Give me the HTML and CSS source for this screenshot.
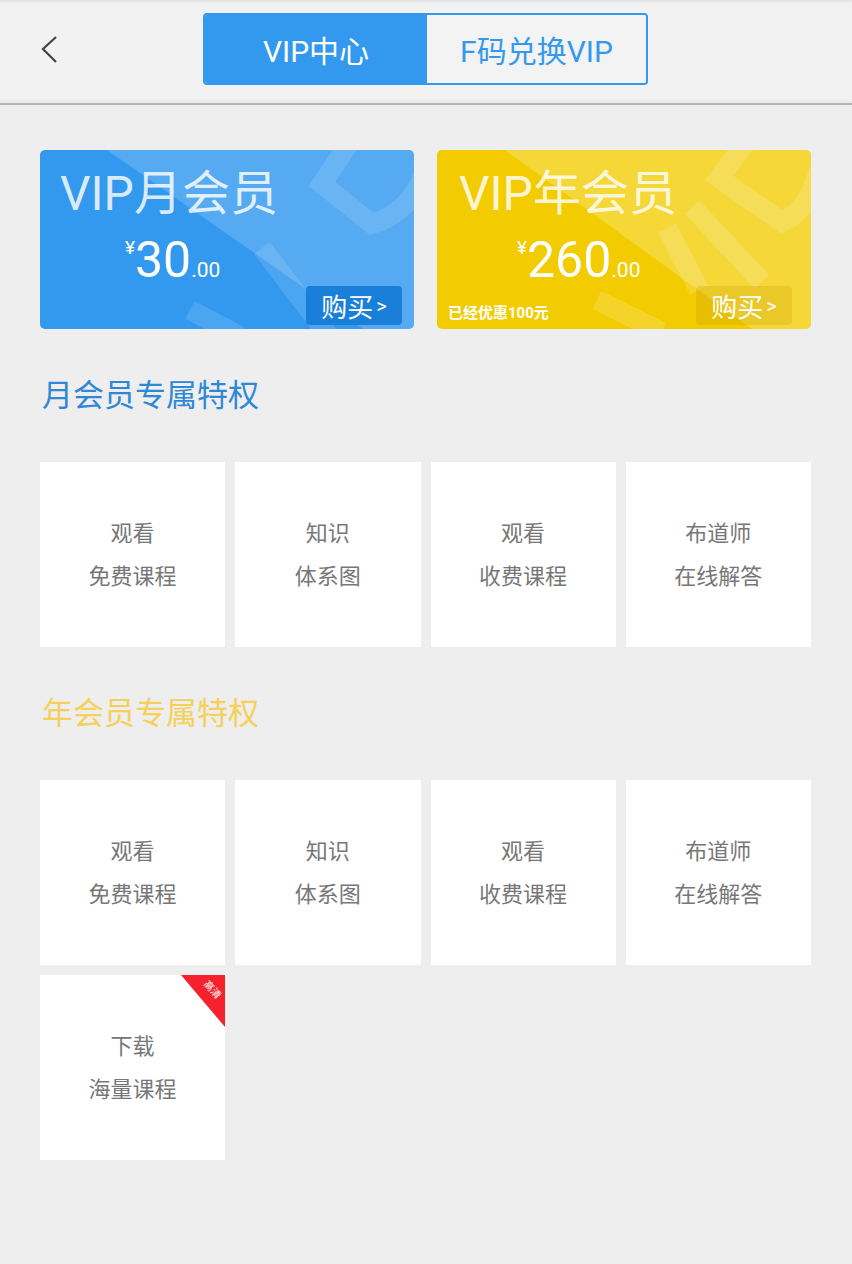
FILE: index.html
```html
<!DOCTYPE html>
<html lang="zh">
<head>
<meta charset="utf-8">
<title>VIP中心</title>
<link rel="stylesheet" href="styles.css">
</head>
<body>
<header class="topbar">
  <div class="back">
    <svg width="20" height="30" viewBox="0 0 20 30"><polyline points="16,2 3,14 16,27" fill="none" stroke="#444" stroke-width="2.2"/></svg>
  </div>
  <div class="segment">
    <div class="seg seg-on">VIP中心</div>
    <div class="seg seg-off">F码兑换VIP</div>
  </div>
</header>

<main class="content">
  <section class="cards">
    <div class="card card-blue">
      <svg class="wm" width="374" height="179" viewBox="0 0 374 179">
        <polygon points="67,0 374,0 374,179 323,179" fill="#fff" fill-opacity="0.17"/>
        <g fill="none" stroke="#fff" stroke-opacity="0.12" stroke-width="20">
          <path d="M310,-8 L282,34 L332,74 Q372,62 386,18"/>
          <path d="M222,98 L292,190"/>
          <path d="M150,160 L200,186"/>
        </g>
      </svg>
      <div class="card-title">VIP月会员</div>
      <div class="price"><span class="yen">¥</span><span class="amt">30</span><span class="dec">.00</span></div>
      <div class="card-foot">
        <span class="note"></span>
        <span class="buy buy-blue">购买<small>&gt;</small></span>
      </div>
    </div>
    <div class="card card-yellow">
      <svg class="wm" width="374" height="179" viewBox="0 0 374 179">
        <polygon points="68,0 374,0 374,179 315,179" fill="#fff" fill-opacity="0.22"/>
        <g fill="none" stroke="#fff" stroke-opacity="0.16" stroke-width="20">
          <path d="M308,-6 L282,28 L345,72 Q372,60 382,20"/>
          <path d="M255,57 L325,132"/>
          <path d="M230,78 L262,140"/>
          <path d="M160,150 L225,182"/>
        </g>
      </svg>
      <div class="card-title">VIP年会员</div>
      <div class="price"><span class="yen">¥</span><span class="amt">260</span><span class="dec">.00</span></div>
      <div class="card-foot">
        <span class="note">已经优惠100元</span>
        <span class="buy buy-yellow">购买<small>&gt;</small></span>
      </div>
    </div>
  </section>

  <h2 class="sec-title sec-blue">月会员专属特权</h2>
  <section class="grid">
    <div class="tile"><span>观看</span><span>免费课程</span></div>
    <div class="tile"><span>知识</span><span>体系图</span></div>
    <div class="tile"><span>观看</span><span>收费课程</span></div>
    <div class="tile"><span>布道师</span><span>在线解答</span></div>
  </section>

  <h2 class="sec-title sec-yellow">年会员专属特权</h2>
  <section class="grid">
    <div class="tile"><span>观看</span><span>免费课程</span></div>
    <div class="tile"><span>知识</span><span>体系图</span></div>
    <div class="tile"><span>观看</span><span>收费课程</span></div>
    <div class="tile"><span>布道师</span><span>在线解答</span></div>
    <div class="tile tile-badge">
      <svg class="ribbon" width="44" height="52" viewBox="0 0 44 52">
        <polygon points="0,0 44,0 44,52" fill="#f5222d"/>
        <text x="29" y="17" transform="rotate(48 29 17)" text-anchor="middle" font-size="10" fill="#fff" font-family="Noto Sans CJK SC, sans-serif">高清</text>
      </svg>
      <span>下载</span><span>海量课程</span>
    </div>
  </section>
</main>
</body>
</html>
```

FILE: styles.css
```css
* { box-sizing: border-box; }
html, body { margin: 0; padding: 0; }
body {
  background: #eeeeee;
  font-family: Roboto, "Liberation Sans", "Noto Sans CJK SC", sans-serif;
  width: 852px;
  min-height: 1264px;
}

.topbar {
  height: 105px;
  background: linear-gradient(#e4e4e4 0, #f2f2f2 4px, #f2f2f2 98px, #eaeaea 103px);
  border-bottom: 2px solid #b4b4b4;
  display: flex;
  align-items: flex-start;
  padding-left: 40px;
}
.back {
  width: 20px;
  height: 30px;
  margin-top: 35px;
}
.back svg { display: block; }
.segment {
  margin-left: 143px;
  margin-top: 13px;
  width: 445px;
  height: 72px;
  border: 2px solid #3399ee;
  border-radius: 4px;
  display: flex;
  overflow: hidden;
}
.seg {
  display: flex;
  align-items: center;
  justify-content: center;
  font-size: 30px;
}
.seg-on {
  width: 222px;
  background: #3399ee;
  color: #fff;
}
.seg-off {
  flex: 1;
  background: #f3f3f3;
  color: #3399ee;
}

.content {
  padding: 45px 41px 0 40px;
}

.cards {
  display: flex;
  gap: 23px;
}
.card {
  position: relative;
  width: 374px;
  height: 179px;
  border-radius: 5px;
  overflow: hidden;
  display: flex;
  flex-direction: column;
  padding: 0 12px 6px 20px;
  color: #fff;
}
.card-blue { background: #3399ee; }
.card-yellow { background: #f2cc00; padding-right: 19px; padding-left: 22px; }
.wm {
  position: absolute;
  left: 0;
  top: 0;
  pointer-events: none;
}
.card-title, .price, .card-foot { position: relative; }
.card-title {
  font-size: 48px;
  line-height: 48px;
  margin-top: 20px;
  color: rgba(255,255,255,0.82);
}
.price {
  margin-left: 65px;
  margin-top: 16px;
  line-height: 52px;
  height: 52px;
  white-space: nowrap;
}
.card-yellow .price { margin-left: 58px; }
.yen {
  font-size: 19px;
  vertical-align: top;
  line-height: 28px;
}
.amt {
  font-size: 50px;
}
.dec {
  font-size: 21px;
}
.card-foot {
  margin-top: auto;
  display: flex;
  justify-content: space-between;
  align-items: flex-end;
}
.note {
  font-size: 15px;
  font-weight: bold;
  margin-left: -11px;
  margin-bottom: 3px;
}
.buy {
  width: 96px;
  height: 39px;
  border-radius: 4px;
  display: flex;
  align-items: center;
  justify-content: center;
  font-size: 26px;
}
.buy small {
  font-size: 20px;
  margin-left: 3px;
}
.buy-blue { background: #1a7fd8; }
.buy-yellow { background: rgba(200,160,0,0.28); }

.sec-title {
  margin: 51px 0 51px 2px;
  font-size: 31px;
  line-height: 31px;
  font-weight: normal;
}
.sec-blue { color: #2e88d6; }
.sec-yellow { color: #f5d05a; }

.grid {
  display: grid;
  grid-template-columns: repeat(4, 1fr);
  gap: 10px;
}
.tile {
  position: relative;
  height: 185px;
  background: #fff;
  display: flex;
  flex-direction: column;
  align-items: center;
  justify-content: center;
  font-size: 22px;
  line-height: 43px;
  color: #777;
}
.ribbon {
  position: absolute;
  right: 0;
  top: 0;
}
```
